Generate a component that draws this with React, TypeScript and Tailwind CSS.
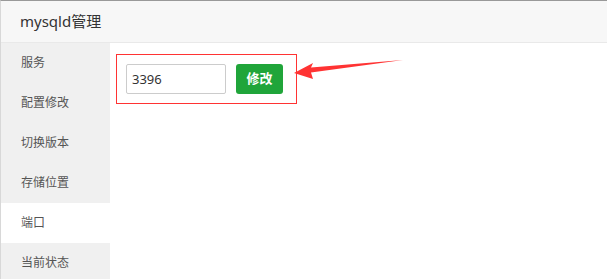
const menu = ["服务", "配置修改", "切换版本", "存储位置", "端口", "当前状态"];

export default function App() {
  return (
    <div
      className="relative w-[607px] h-[279px] overflow-hidden bg-white border-t border-[#999] border-l border-l-[#d8d8d8]"
      style={{ fontFamily: '"Noto Sans", "Noto Sans CJK SC", sans-serif' }}
    >
      <div className="h-[42px] bg-[#f7f7f7] border-b border-[#e9e9e9] flex items-center pl-[19px] text-[15px] text-[#333]">
        mysqld管理
      </div>
      <div className="flex h-[236px]">
        <div className="w-[109px] bg-[#f0f0f0] flex flex-col">
          {menu.map((m) => (
            <div
              key={m}
              className={
                "h-10 shrink-0 flex items-center pl-[20px] text-[12px] text-[#555] " +
                (m === "端口" ? "bg-white" : "")
              }
            >
              {m}
            </div>
          ))}
        </div>
        <div className="flex-1 pt-[11px] pl-[6px]">
          <div className="w-[181px] h-[50px] border border-[#f33] flex items-center pl-[9px] gap-[10px]">
            <input
              defaultValue="3396"
              className="w-[100px] h-[30px] border border-[#ccc] rounded-[2px] px-[5px] text-[13px] text-[#333] outline-none"
            />
            <button className="w-[47px] h-[30px] bg-[#20a53a] rounded-[3px] text-white text-[13px] font-bold">
              修改
            </button>
          </div>
        </div>
      </div>
      <svg className="absolute left-0 top-0" width="607" height="279">
        <polygon
          points="293,72 312,62 310,66.5 402,59 310,71.5 312,78"
          fill="#f33"
        />
      </svg>
    </div>
  );
}
